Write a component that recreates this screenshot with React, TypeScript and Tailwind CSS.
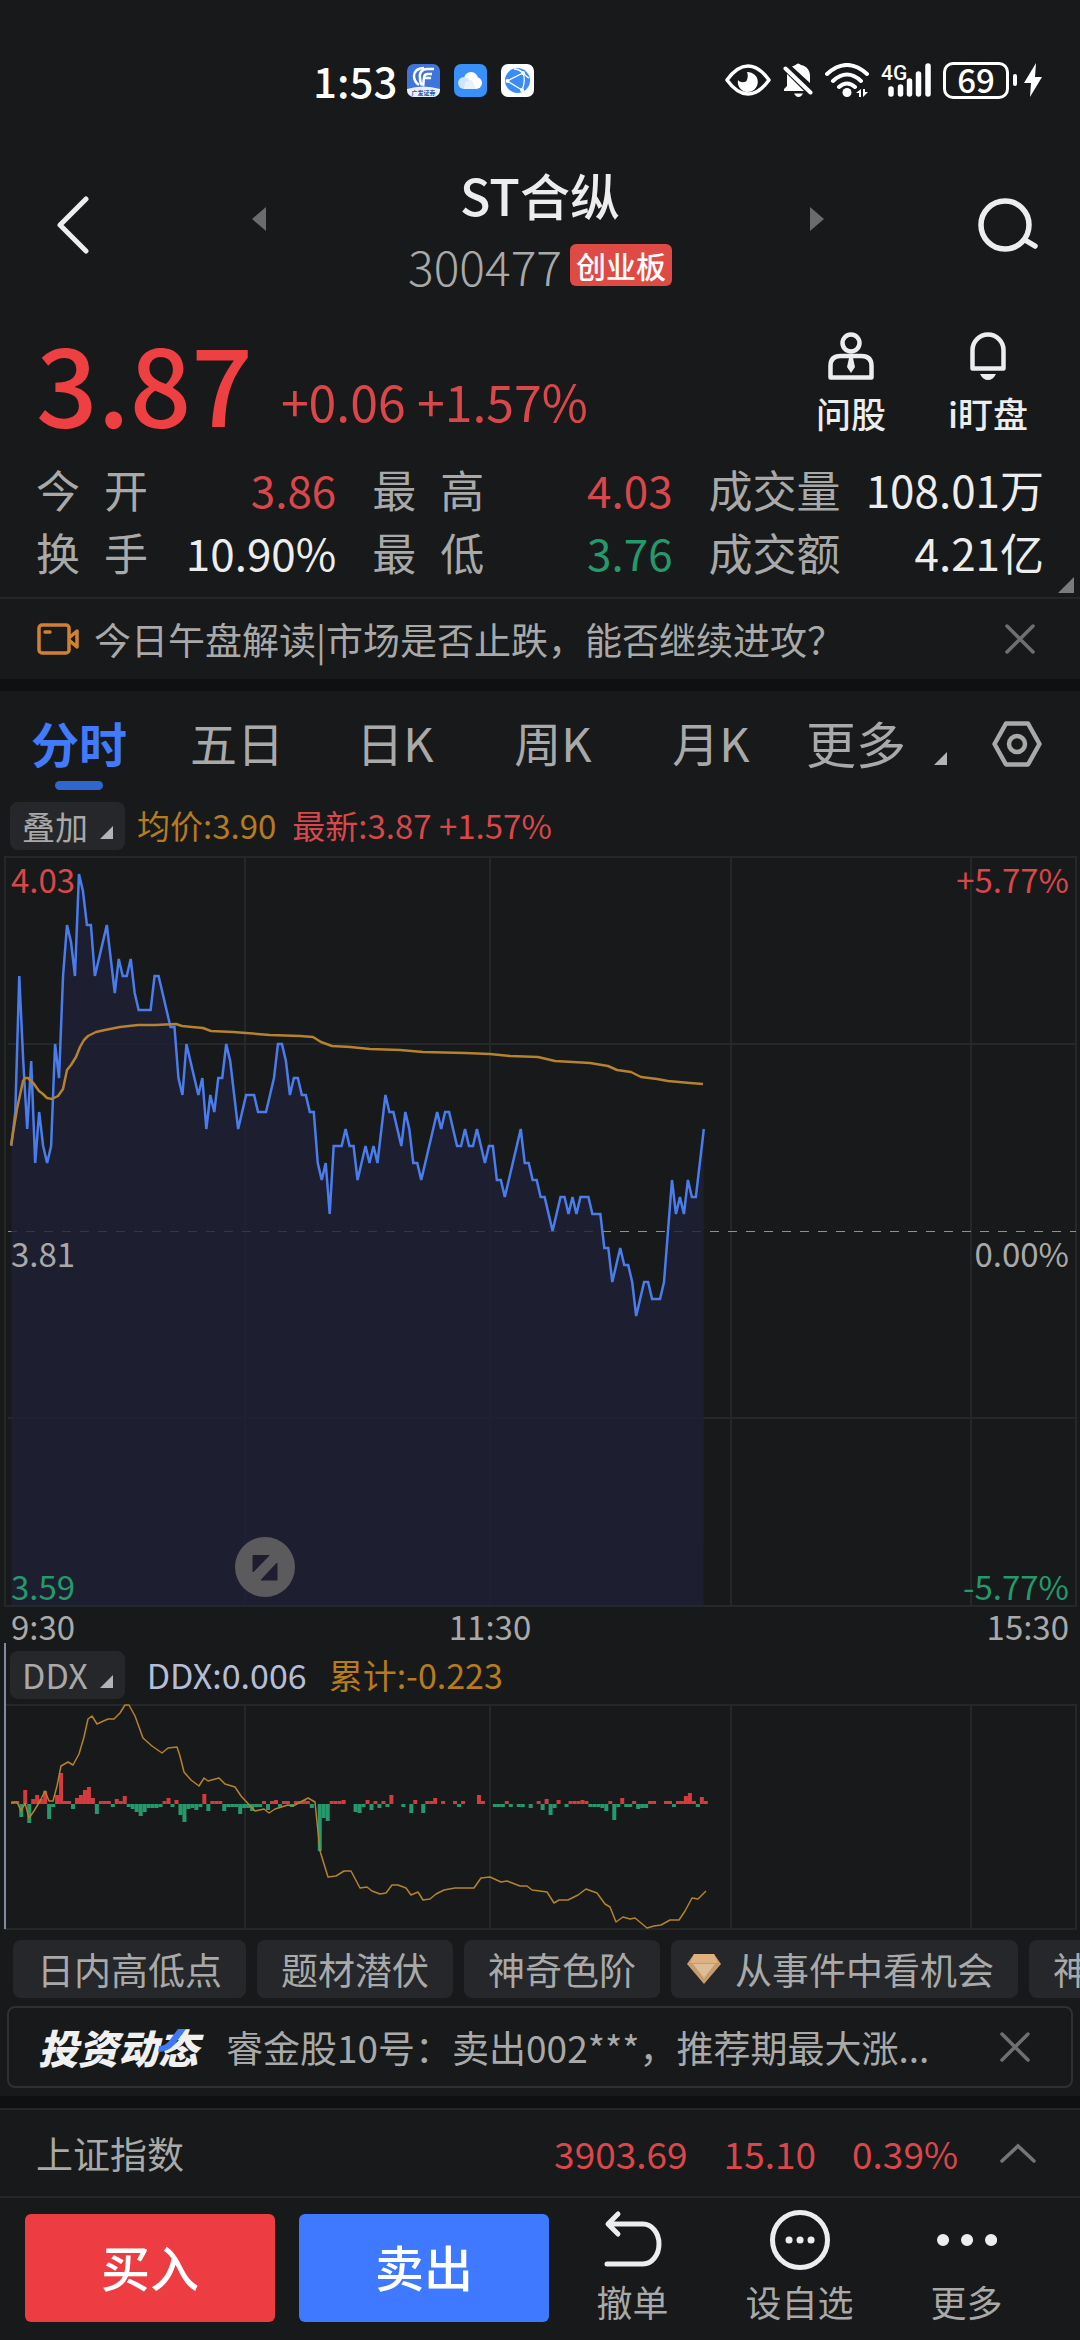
import type { ReactNode } from "react";

// price of every minute, in cents above yesterday's close (3.81)
const PRICES = [
  5, 7, 15, 10, 6, 10, 4, 7, 5, 4, 5, 11, 9, 15, 18, 17, 15, 21, 20, 18, 18, 15, 16, 17, 18, 16, 14,
  16, 15, 15, 16, 14, 13, 13, 13, 13, 15, 15, 14, 13, 12, 12, 9, 8, 11, 10, 9, 8, 9, 6, 8, 7, 9, 9,
  11, 10, 8, 6, 7, 8, 8, 8, 7, 7, 7, 8, 9, 11, 11, 10, 8, 9, 9, 8, 8, 7, 7, 4, 3, 4, 1, 5, 5, 5, 6,
  5, 5, 3, 4, 5, 4, 5, 4, 6, 8, 7, 7, 6, 5, 7, 6, 4, 4, 3, 4, 5, 6, 7, 6, 7, 7, 6, 5, 5, 6, 5, 5, 6,
  5, 4, 5, 5, 3, 3, 2, 3, 4, 5, 6, 4, 4, 3, 3, 2, 2, 1, 0, 1, 2, 2, 1, 2, 1, 2, 2, 2, 1, 1, 1, -1,
  -1, -3, -2, -1, -2, -2, -3, -5, -4, -3, -3, -4, -4, -4, -3, 0, 3, 1, 2, 1, 3, 2, 2, 4, 6,
];

const AVERAGE =
  "11,290 17,254 23,226 25,223 28,223 34,229 39,236 43,239 47,243 52,244 58,241 63,234 67,215 71,210 76,202 80,192 84,185 88,181 96,177 105,175 120,172 138,170 155,170 176,169 182,171 192,172 203,173 211,176 233,177 270,180 300,181 313,182 321,187 332,191 350,192 370,194 400,195 423,197 465,198 490,199 510,201 538,202 555,206 590,208 608,211 617,215 631,217 641,222 657,224 668,226 690,228 703,229";

const DDX = [
  3, 3, -13, 14, -19, 5, 9, 5, 13, -15, -3, 9, 31, 3, 3, -5, 6, 9, 14, 17, 6, -10, 3, 3, 3, -3, 5, 3,
  8, -3, -5, -8, -12, -8, -4, -4, -4, -3, 3, 6, -3, 4, -11, -18, -5, -4, -6, -3, 10, -7, 3, 3, 3, -7,
  -3, -3, -3, -10, -4, -4, -7, -3, -3, 3, -6, 3, 4, -3, 3, 3, -3, 3, 3, 4, 3, -4, 0, -47, -14, -17,
  3, 3, 3, 4, 0, 0, -8, -9, -3, 4, -6, 3, -4, 3, -3, 9, 0, 0, -3, 0, -9, 4, 0, -9, 3, 3, 6, 0, 3, 0,
  0, 3, -3, 3, 0, 0, 0, 9, 3, 0, 0, -3, -3, -3, 3, -3, 0, -3, -3, 0, -4, 0, 3, -6, 5, -11, -4, 4, 0,
  -3, 3, 3, 3, 4, 3, -3, -3, -3, -4, -7, 3, -16, -3, 6, -3, -3, 3, -5, -4, -4, 3, 3, 0, 0, 3, 3, -3,
  3, 3, 8, 11, 3, -3, 7, 3,
];

const DDX_SUM =
  "11,99 17,98 21,107 25,99 29,114 34,107 40,97 45,87 49,97 53,97 57,82 61,62 68,58 73,61 79,50 84,33 88,15 92,12 97,20 108,15 114,15 120,9 125,1 129,1 135,12 143,34 152,42 162,49 168,44 177,43 180,52 184,68 191,76 199,82 204,74 208,77 219,74 225,80 235,83 241,92 255,107 264,105 269,109 275,105 288,101 293,102 308,94 315,98 317,118 320,147 328,173 336,172 344,167 351,167 360,184 367,183 372,187 380,190 386,189 392,181 398,181 406,184 411,191 418,188 423,196 430,195 436,190 444,186 455,184 474,184 481,174 490,173 501,178 507,177 520,182 527,182 532,186 540,187 547,188 554,199 559,196 568,196 578,191 586,185 597,189 605,200 610,203 616,218 623,213 630,215 635,214 647,224 654,222 661,221 670,216 679,216 685,207 692,194 698,195 706,187";

const GRID_X = [245, 490, 731, 971];

const minuteX = (i: number) => 11.3 + i * 3.98;

const QUOTES = [
  { label: ["今", "开"], value: "3.86", color: "text-[#d9474a]" },
  { label: ["最", "高"], value: "4.03", color: "text-[#d9474a]" },
  { label: ["成交量"], value: "108.01万", color: "text-[#ededed]" },
  { label: ["换", "手"], value: "10.90%", color: "text-[#ededed]" },
  { label: ["最", "低"], value: "3.76", color: "text-[#23996c]" },
  { label: ["成交额"], value: "4.21亿", color: "text-[#ededed]" },
];

export default function App() {
  return (
    <div className="min-h-screen overflow-hidden bg-[#17191a] font-['Noto_Sans_CJK_SC',sans-serif] text-[#a9a9a9]">
      <StatusBar />
      <Header />
      <Quote />
      <NewsBanner />
      <div className="h-3 bg-[#0f1012]" />
      <PeriodTabs />
      <PriceChart />
      <DdxChart />
      <Tools />
      <Notice />
      <div className="mt-2 h-3 bg-[#0f1012]" />
      <IndexRow />
      <ActionBar />
    </div>
  );
}

function StatusBar() {
  return (
    <div className="flex h-[160px] items-start justify-between pt-14 pr-[38px] pl-[313px] text-white">
      <div className="flex h-12 items-center gap-[14px]">
        <span className="text-[42px] leading-[48px] font-medium">1:53</span>
        <svg className="-ml-1 size-[33px]" viewBox="0 0 33 33">
          <rect width="33" height="33" rx="7" fill="#3f74dd" />
          <path d="M0 25q16-5 33 0v1a7 7 0 0 1-7 7H7a7 7 0 0 1-7-7z" fill="#e9f1ff" />
          <path d="M17 4C10 4 7 8 7 12c0 4 2 7 5 9" fill="none" stroke="#fff" strokeWidth="2.500" />
          <path d="M27 5h-7c-5 0-8 4-7 9 0 3 1 6 2 7M25 10h-4c-3 0-4 2-4 4-1 4 0 6-1 8M24 14h-6" fill="none" stroke="#fff" strokeWidth="2.500" />
          <text x="16.500" y="31" textAnchor="middle" fontSize="6" fontWeight="700" fill="#2d55a5">广发证券</text>
        </svg>
        <svg className="size-[33px]" viewBox="0 0 33 33">
          <rect width="33" height="33" rx="7" fill="#3990fb" />
          <circle cx="17" cy="15" r="7" fill="#fff" />
          <circle cx="22" cy="19" r="6" fill="#fff" />
          <circle cx="10" cy="19" r="6" fill="#cfe4ff" />
          <path d="M10 25h12l-4-9-7 2z" fill="#e8f2ff" />
        </svg>
        <svg className="size-[33px]" viewBox="0 0 33 33">
          <rect width="33" height="33" rx="7" fill="#fff" />
          <circle cx="16.500" cy="16.500" r="12.500" fill="#3b8cf5" />
          <path d="M6 17 22 9M6 17l15 9M22 9q3 8-1 17M13 5q5 0 9 4t6 5" fill="none" stroke="#fff" strokeWidth="1.300" />
          <circle cx="6.500" cy="17" r="2" fill="#fff" />
          <circle cx="22" cy="9" r="2" fill="#fff" />
          <circle cx="21" cy="26" r="2" fill="#fff" />
        </svg>
      </div>
      <div className="flex h-12 items-center gap-3">
        <svg className="h-[32px] w-[46px]" viewBox="0 0 46 32">
          <path d="M2 16Q12 2 23 2t21 14Q34 30 23 30T2 16z" fill="none" stroke="#fff" strokeWidth="3.500" strokeLinejoin="round" />
          <path d="M22 8a10 10 0 1 1-9 8c2 3 8 3 9 0 1-3 1-6 0-8z" fill="#fff" />
        </svg>
        <svg className="h-[34px] w-[30px]" viewBox="0 0 30 34" fill="#fff">
          <path d="M9 3.500 12.500 2Q15-1 18 2c6 1 9 6 9 11v7zM4 11l17 17H1v-2l3-3zM11 30.500h9q-2 3.500-4.500 3.500T11 30.500z" />
          <path d="m2.500 5.500 25 24" stroke="#fff" strokeWidth="4" strokeLinecap="round" />
        </svg>
        <svg className="h-[34px] w-[44px]" viewBox="0 0 44 34">
          <g fill="none" stroke="#fff" strokeWidth="4" strokeLinecap="round">
            <path d="M2 11q20-18 40 0M8 18q14-13 28 0M14 24q8-7 16 0" />
          </g>
          <circle cx="22" cy="29.500" r="4.500" fill="#fff" />
          <path d="M36 26v8h-2v-4h-3zM38 26v8l5-5h-3v-3z" fill="#fff" />
        </svg>
        <div className="relative">
          <span className="absolute top-0 left-0 font-['Roboto',sans-serif] text-[21px] leading-5 font-medium">4G</span>
          <svg className="h-[34px] w-[50px]" viewBox="0 0 50 34">
            <path d="M10 26v5M19.500 24v7M28.500 18v13M37.500 11v20M47 3v28" stroke="#fff" strokeWidth="5.500" strokeLinecap="round" />
          </svg>
        </div>
        <div className="flex items-center gap-1">
          <span className="flex h-[37px] w-[66px] items-center justify-center rounded-[10px] border-3 border-white pb-[2px] text-[33px] leading-8 font-medium">
            69
          </span>
          <span className="h-3 w-1 rounded-full bg-white" />
          <svg className="ml-[3px] h-[34px] w-[18px]" viewBox="0 0 18 34">
            <path d="M12 0 0 20h7L6 34l12-20h-7z" fill="#fff" />
          </svg>
        </div>
      </div>
    </div>
  );
}

function Header() {
  return (
    <header className="flex h-[141px] items-center">
      <div className="flex w-1/4 items-center justify-between pr-1 pl-[57px]">
        <button aria-label="返回" className="mb-3">
          <svg className="h-[58px] w-8" viewBox="0 0 32 58">
            <path d="M29 3 3 29l26 26" fill="none" stroke="#ededed" strokeWidth="5" strokeLinecap="round" strokeLinejoin="round" />
          </svg>
        </button>
        <button aria-label="上一只" className="mb-6">
          <svg className="h-6 w-[14px]" viewBox="0 0 14 24">
            <path d="M14 0v24L0 12z" fill="#6b6b6b" />
          </svg>
        </button>
      </div>
      <div className="w-1/2 text-center">
        <h1 className="text-[50px] leading-[68px] font-medium text-[#ededed]">ST合纵</h1>
        <div className="flex h-[73px] items-center justify-center gap-2">
          <span className="text-[48px] leading-[60px] font-light">300477</span>
          <span className="rounded-md bg-[#e04a44] px-[6px] text-[30px] leading-[42px] font-medium text-white">创业板</span>
        </div>
      </div>
      <div className="flex w-1/4 items-center justify-between pr-[42px]">
        <button aria-label="下一只" className="mb-6">
          <svg className="h-6 w-[14px]" viewBox="0 0 14 24">
            <path d="M0 0v24l14-12z" fill="#6b6b6b" />
          </svg>
        </button>
        <button aria-label="搜索" className="mb-3">
          <svg className="h-[54px] w-[60px]" viewBox="0 0 60 54">
            <g fill="none" stroke="#ededed" strokeWidth="5.500" strokeLinecap="round">
              <circle cx="27" cy="27" r="24" />
              <path d="m47 42 10 6" />
            </g>
          </svg>
        </button>
      </div>
    </header>
  );
}

function Quote() {
  return (
    <section className="relative border-b-2 border-[#242628] pb-[13px]">
      <div className="flex h-[157px] pr-[52px] pl-9">
        <div className="flex flex-1 items-end gap-7">
          <span className="text-[108px] leading-[156px] font-medium text-[#ee3f43]">3.87</span>
          <span className="pb-4 text-[50px] leading-[84px] text-[#d9474a]">+0.06 +1.57%</span>
        </div>
        <div className="flex items-start gap-[62px] pt-[31px] text-[35px] leading-[66px] font-medium text-[#ededed]">
          <button className="flex flex-col items-center">
            <svg className="h-12 w-[46px]" viewBox="0 0 46 48">
              <g fill="none" stroke="#ededed" strokeWidth="4.500">
                <circle cx="23" cy="11" r="8.500" />
                <path d="M2.500 45.500V34q0-10 10-10h21q10 0 10 10v11.500z" strokeLinejoin="round" />
              </g>
              <path d="M21 26h4l2 9-4 6-4-6z" fill="#ededed" />
            </svg>
            问股
          </button>
          <button className="flex flex-col items-center">
            <svg className="h-12 w-9" viewBox="0 0 36 48">
              <path d="M2.500 36.500V18a15.500 15.500 0 0 1 31 0v18.500z" fill="none" stroke="#ededed" strokeWidth="4.500" strokeLinejoin="round" />
              <path d="M10 42h16q-3 6-8 6t-8-6z" fill="#ededed" />
            </svg>
            i盯盘
          </button>
        </div>
      </div>
      <dl className="grid grid-cols-[299fr_299fr_334fr] gap-x-9 px-9 text-[44px] leading-[63px]">
        {QUOTES.map((q) => (
          <div key={q.value} className="flex justify-between whitespace-nowrap">
            <dt className="flex gap-6">
              {q.label.map((part) => (
                <span key={part}>{part}</span>
              ))}
            </dt>
            <dd className={q.color}>{q.value}</dd>
          </div>
        ))}
      </dl>
      <svg className="absolute right-[6px] bottom-1 size-4" viewBox="0 0 16 16">
        <path d="M16 0v16H0z" fill="#7b7b7b" />
      </svg>
    </section>
  );
}

function NewsBanner() {
  return (
    <div className="flex h-20 items-center pr-[45px] pl-[37px]">
      <svg className="mr-[14px] h-8 w-[43px]" viewBox="0 0 43 32">
        <g fill="none" stroke="#d08132" strokeWidth="3.500" strokeLinejoin="round" strokeLinecap="round">
          <rect x="2" y="2" width="30" height="28" rx="3" />
          <path d="M8 9h5M33 14l7-6v16l-7-6" />
        </g>
      </svg>
      <a href="#news" className="flex-1 text-[37px] leading-[56px] whitespace-nowrap">
        今日午盘解读|市场是否止跌，能否继续进攻？
      </a>
      <CloseButton />
    </div>
  );
}

function CloseButton() {
  return (
    <button aria-label="关闭">
      <svg className="size-[30px]" viewBox="0 0 30 30">
        <path d="m2 2 26 26M28 2 2 28" stroke="#6f6f6f" strokeWidth="3.500" strokeLinecap="round" />
      </svg>
    </button>
  );
}

function Corner() {
  return (
    <svg className="size-[13px]" viewBox="0 0 13 13">
      <path d="M13 0v13H0z" fill="#b4b4b4" />
    </svg>
  );
}

function PeriodTabs() {
  return (
    <nav className="grid h-[111px] grid-cols-[158fr_158fr_158fr_158fr_158fr_290fr] items-start pt-4 text-[47px] leading-[70px]">
      <button className="flex flex-col items-center text-[48px] font-bold text-[#417bfb]">
        分时
        <span className="mt-1 h-[9px] w-12 rounded-full bg-[#2f66d0]" />
      </button>
      <button>五日</button>
      <button>日K</button>
      <button>周K</button>
      <button>月K</button>
      <div className="flex items-start justify-between pr-[38px] pl-4">
        <button className="flex items-end gap-[28px] text-[50px]">
          更多
          <span className="flex pb-3">
            <Corner />
          </span>
        </button>
        <button aria-label="设置" className="mt-[14px]">
          <svg className="block h-[46px] w-[50px]" viewBox="0 0 50 46">
            <g fill="none" stroke="#a9a9a9" strokeWidth="4.500" strokeLinejoin="round">
              <path d="M14 2.500h22L47.500 23 36 43.500H14L2.500 23z" />
              <circle cx="25" cy="23" r="8" />
            </g>
          </svg>
        </button>
      </div>
    </nav>
  );
}

function ChartButton({ children }: { children: ReactNode }) {
  return (
    <button className="flex h-12 items-center gap-3 rounded-lg bg-[#26272a] px-3">
      {children}
      <span className="pt-3">
        <Corner />
      </span>
    </button>
  );
}

function PriceChart() {
  const line = PRICES.map((p, i) => `${minuteX(i)},${376 - p * 17}`).join(" ");

  return (
    <section className="text-[33px] leading-[46px]">
      <div className="flex h-[53px] items-start gap-4 px-[10px] whitespace-nowrap">
        <ChartButton>叠加</ChartButton>
        <span className="-ml-1 text-[#b67b1c]">均价:3.90</span>
        <span className="text-[#d9474a]">最新:3.87 +1.57%</span>
      </div>
      <div className="relative">
        <svg className="block h-auto w-full" viewBox="0 0 1080 752">
          <g fill="none" stroke="#252729" strokeWidth="2">
            <rect x="5" y="2" width="1071" height="749" />
            {GRID_X.map((x) => (
              <path key={x} d={`M${x} 2v749`} />
            ))}
            <path d="M8 189h1068M8 563h1068" />
          </g>
          <path d="M8 376.500h1068" stroke="#8d909c" strokeDasharray="9 9" />
          <polygon points={`11.3,750 ${line} 703.8,750`} fill="#1f1f36" fillOpacity="0.800" />
          <polyline points={line} fill="none" stroke="#4a7cec" strokeWidth="2.500" />
          <polyline points={AVERAGE} fill="none" stroke="#b5822f" strokeWidth="2.500" strokeLinejoin="round" />
        </svg>
        <div className="absolute inset-0 flex flex-col justify-between px-[11px] pt-[3px] leading-[42px]">
          <div className="flex justify-between text-[#d9474a]">
            <span>4.03</span>
            <span>+5.77%</span>
          </div>
          <div className="flex justify-between pt-10">
            <span>3.81</span>
            <span>0.00%</span>
          </div>
          <div className="flex justify-between text-[#23996c]">
            <span>3.59</span>
            <span>-5.77%</span>
          </div>
        </div>
        <button aria-label="展开" className="absolute bottom-[10px] left-[235px]">
          <svg className="block size-[60px]" viewBox="0 0 60 60">
            <circle cx="30" cy="30" r="30" fill="#5b5b5e" />
            <path d="M18 18.500h16L18 35zM42 26v17H26z" fill="#1e1e30" stroke="#1e1e30" strokeLinejoin="round" />
          </svg>
        </button>
      </div>
      <div className="grid h-9 grid-cols-[379fr_200fr_479fr] px-[11px] leading-[38px]">
        <span>9:30</span>
        <span className="text-center">11:30</span>
        <span className="text-right">15:30</span>
      </div>
    </section>
  );
}

function DdxChart() {
  return (
    <section className="text-[34px] leading-[48px]">
      <div className="ml-1 border-l-2 border-[#838ba0]">
        <div className="flex h-[61px] items-start gap-[22px] pt-2 pl-1 whitespace-nowrap">
          <ChartButton>DDX</ChartButton>
          <span className="text-[#b5bed6]">DDX:0.006</span>
          <span className="text-[#b67b1c]">累计:-0.223</span>
        </div>
      </div>
      <svg className="block h-auto w-full" viewBox="0 0 1080 226">
        <g fill="none" stroke="#252729" strokeWidth="2">
          <rect x="5" y="1" width="1071" height="224" />
          {GRID_X.map((x) => (
            <path key={x} d={`M${x} 1v224`} />
          ))}
        </g>
        <path d="M5 0v225" stroke="#838ba0" strokeWidth="2" />
        {DDX.map((v, i) => (
          <rect
            key={i}
            x={minuteX(i)}
            y={v > 0 ? 100 - v : 100}
            width="4"
            height={Math.abs(v)}
            fill={v > 0 ? "#d53b3e" : "#23996c"}
          />
        ))}
        <polyline points={DDX_SUM} fill="none" stroke="#b5822f" strokeWidth="1.500" strokeLinejoin="round" />
      </svg>
    </section>
  );
}

function Tools() {
  return (
    <div className="mt-[10px] flex gap-[11px] overflow-hidden pl-[13px] text-[37px] leading-[58px] whitespace-nowrap">
      <Tool>日内高低点</Tool>
      <Tool>题材潜伏</Tool>
      <Tool>神奇色阶</Tool>
      <Tool>
        <svg className="-ml-2 h-[30px] w-[34px]" viewBox="0 0 34 30">
          <path d="M7 0h20l7 10-17 20L0 10z" fill="#c99b6c" />
          <path d="M7 0h20l4 9H3z" fill="#dfb080" />
          <path d="M6 10h22L17 24z" fill="#dbbd9a" />
        </svg>
        从事件中看机会
      </Tool>
      <Tool>神奇电波</Tool>
    </div>
  );
}

function Tool({ children }: { children: ReactNode }) {
  return (
    <button className="flex shrink-0 items-center gap-[14px] rounded-lg bg-[#26272a] px-6">{children}</button>
  );
}

function Notice() {
  return (
    <div className="mx-[7px] mt-2 flex h-[82px] items-center rounded-lg border-2 border-[#2e3032] pr-[41px] pl-[29px]">
      <span className="relative text-[40px] leading-[60px] font-black text-[#f0f0f0] italic">
        投资动态
        <svg className="absolute top-3 right-3 h-6 w-7" viewBox="0 0 28 24">
          <path d="M28 0h-8l-9 12Q7 17 1 17l-1 6q10 0 16-7z" fill="#3f78f5" />
        </svg>
      </span>
      <a href="#notice" className="ml-7 flex-1 truncate text-[37px] leading-[60px]">
        睿金股10号：卖出002***，推荐期最大涨...
      </a>
      <CloseButton />
    </div>
  );
}

function IndexRow() {
  return (
    <div className="flex h-[90px] items-center border-y-2 border-[#242628] pr-11 pl-9 text-[37px] leading-[60px]">
      <span className="flex-1">上证指数</span>
      <div className="flex gap-9 text-[#d9474a]">
        <span>3903.69</span>
        <span>15.10</span>
        <span>0.39%</span>
      </div>
      <button aria-label="展开指数" className="ml-[42px]">
        <svg className="h-5 w-9" viewBox="0 0 36 20">
          <path d="M2 18 18 3l16 15" fill="none" stroke="#757575" strokeWidth="3.500" strokeLinecap="round" />
        </svg>
      </button>
    </div>
  );
}

function ActionBar() {
  return (
    <footer className="flex gap-6 pt-4 pr-[30px] pl-[25px] text-[49px] font-medium text-white">
      <button className="h-[108px] w-[250px] rounded-md bg-[#ed3d42] pb-1">买入</button>
      <button className="h-[108px] w-[250px] rounded-md bg-[#3e79ff] pb-1">卖出</button>
      <div className="-ml-6 grid flex-1 grid-cols-3">
        <Action label="撤单">
          <path d="M15 4 5 14l10 10M6 14h34a16 20 0 0 1 0 40H4" />
        </Action>
        <Action label="设自选">
          <circle cx="30" cy="30" r="27.500" />
          <path d="M19 30h.1M30 30h.1M41 30h.1" strokeWidth="7" />
        </Action>
        <Action label="更多">
          <path d="M6 30h.1M30 30h.1M54 30h.1" strokeWidth="12" />
        </Action>
      </div>
    </footer>
  );
}

function Action({ label, children }: { label: string; children: ReactNode }) {
  return (
    <button className="flex flex-col items-center text-[36px] leading-[62px] font-normal text-[#a9a9a9]">
      <svg className="-mt-1 size-[60px] shrink-0" viewBox="0 0 60 60" fill="none" stroke="#ededed" strokeWidth="5" strokeLinecap="round" strokeLinejoin="round">
        {children}
      </svg>
      {label}
    </button>
  );
}
